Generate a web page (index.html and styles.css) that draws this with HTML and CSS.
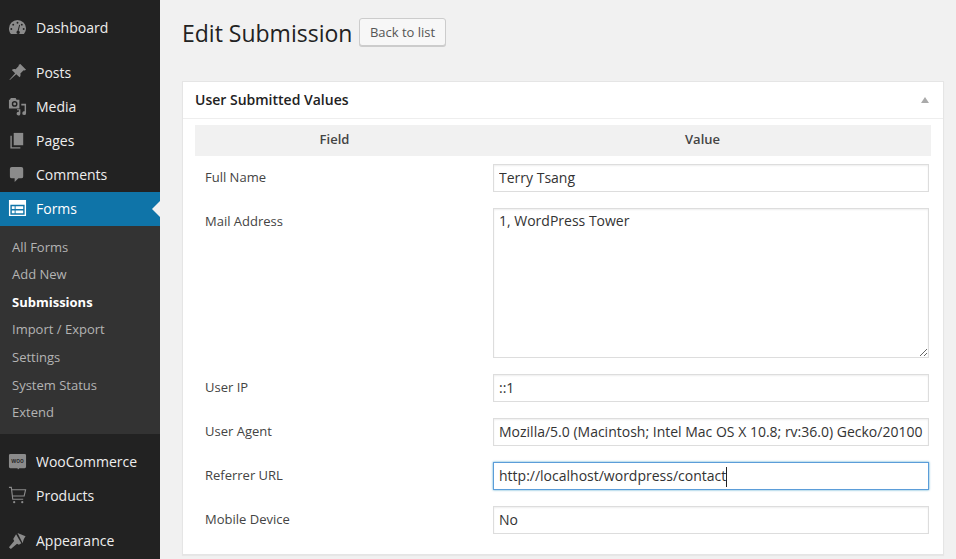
FILE: index.html
```html
<!DOCTYPE html>
<html lang="en">
<head>
    <meta charset="UTF-8">
    <meta name="viewport" content="width=device-width, initial-scale=1.0">
    <title>Edit Submission</title>
    <link rel="stylesheet" href="styles.css">
</head>
<body>
    <div class="sidebar">
        <ul class="menu">
            <li class="menu-item">
                <svg class="icon" viewBox="0 0 20 20"><path d="M10 2a9 9 0 0 0-9 9c0 2.300.8 4.300 2.200 5.900h13.600A9 9 0 0 0 19 11a9 9 0 0 0-9-9zM10 4a1 1 0 1 1 0 2 1 1 0 0 1 0-2zM5.500 6a1 1 0 1 1 0 2 1 1 0 0 1 0-2zM14.500 6a1 1 0 1 1 0 2 1 1 0 0 1 0-2zM3.500 10.500a1 1 0 1 1 0 2 1 1 0 0 1 0-2zM16.500 10.500a1 1 0 1 1 0 2 1 1 0 0 1 0-2zM11.800 7l.9.4-1.500 6a1.800 1.800 0 1 1-2.300 1.700c0-.8.5-1.400 1.200-1.700z" fill-rule="evenodd"/></svg>
                Dashboard
            </li>
            <li class="menu-item gap">
                <svg class="icon" viewBox="0 0 20 20"><path d="M13 1l6 6-1.500 1-1-.5-3.500 3.500c.5 1.500.2 3-.8 4L8.700 11.900 2 18l-.5-.5 6-6.800L4 7.300c1-1 2.500-1.300 4-.8L11.500 3l-.5-1z"/></svg>
                Posts
            </li>
            <li class="menu-item">
                <svg class="icon" viewBox="0 0 20 20"><path d="M3 1h5l1 2h3v9H1V3h1zM7 4.300a3 3 0 1 0 0 6 3 3 0 0 0 0-6zM7 5.800a1.500 1.500 0 1 1 0 3 1.500 1.500 0 0 1 0-3z" fill-rule="evenodd"/><path d="M14 7h5v10a2 2 0 1 1-1.500-1.900V9H14zM9.500 14v-1h3.500v4.500a2 2 0 1 1-1.500-1.900V14z"/></svg>
                Media
            </li>
            <li class="menu-item">
                <svg class="icon" viewBox="0 0 20 20"><path d="M6 2h10v13H6z"/><path d="M4 5v12h9v1.500H2.500V5z"/></svg>
                Pages
            </li>
            <li class="menu-item">
                <svg class="icon" viewBox="0 0 20 20"><path d="M4 2h10a2 2 0 0 1 2 2v8a2 2 0 0 1-2 2h-3l-4 4v-4H4a2 2 0 0 1-2-2V4a2 2 0 0 1 2-2z"/></svg>
                Comments
            </li>
            <li class="menu-item current">
                <svg class="icon" viewBox="0 0 20 20"><path d="M1 1h18v17H1zM2.500 6v10.500h15V6zM4 7.500h3v3H4zM8 7.500h8v3H8zM4 12h3v3H4zM8 12h8v3H8z" fill-rule="evenodd"/></svg>
                Forms
            </li>
            <li>
                <ul class="submenu">
                    <li>All Forms</li>
                    <li>Add New</li>
                    <li class="active">Submissions</li>
                    <li>Import / Export</li>
                    <li>Settings</li>
                    <li>System Status</li>
                    <li>Extend</li>
                </ul>
            </li>
            <li class="menu-item gap after-sub">
                <svg class="icon" viewBox="0 0 20 20"><path d="M2.500 2h15A1.500 1.500 0 0 1 19 3.500v12a1.500 1.500 0 0 1-1.500 1.500H12l-1.500 1.500L10 17H2.500A1.500 1.500 0 0 1 1 15.500v-12A1.500 1.500 0 0 1 2.500 2z"/><text class="woo-mark" x="10" y="11.500" text-anchor="middle">woo</text></svg>
                WooCommerce
            </li>
            <li class="menu-item">
                <svg class="icon" viewBox="0 0 20 20"><path class="cart" d="M1 1.500h2.500l1.500 12.500h11M4 4h14.500l-1.500 6.500H5"/><circle cx="6.500" cy="17" r="1.200"/><circle cx="15" cy="17" r="1.200"/></svg>
                Products
            </li>
            <li class="menu-item gap">
                <svg class="icon" viewBox="0 0 20 20"><path d="M10 2l8.500 3.500c-1.500 2-2.500 4-3 7.500zM8.500 3.500L14 13l-2.500 1.500-2-1L3 19l-2-2 5.500-6.500-1-2z"/></svg>
                Appearance
            </li>
        </ul>
    </div>

    <div class="content">
        <div class="title-row">
            <h1>Edit Submission</h1>
            <a class="button">Back to list</a>
        </div>

        <div class="panel">
            <div class="panel-head">
                <h2>User Submitted Values</h2>
                <span class="toggle"></span>
            </div>
            <div class="panel-body">
                <table class="values">
                    <thead>
                        <tr>
                            <th class="col-field">Field</th>
                            <th class="col-value">Value</th>
                        </tr>
                    </thead>
                    <tbody>
                        <tr>
                            <td class="label">Full Name</td>
                            <td class="value"><input type="text" value="Terry Tsang"></td>
                        </tr>
                        <tr>
                            <td class="label">Mail Address</td>
                            <td class="value"><textarea>1, WordPress Tower</textarea></td>
                        </tr>
                        <tr>
                            <td class="label">User IP</td>
                            <td class="value"><input type="text" value="::1"></td>
                        </tr>
                        <tr>
                            <td class="label">User Agent</td>
                            <td class="value"><input type="text" value="Mozilla/5.0 (Macintosh; Intel Mac OS X 10.8; rv:36.0) Gecko/20100101 Firefox/36.0"></td>
                        </tr>
                        <tr>
                            <td class="label">Referrer URL</td>
                            <td class="value"><div class="focused">http://localhost/wordpress/contact<span class="caret"></span></div></td>
                        </tr>
                        <tr>
                            <td class="label">Mobile Device</td>
                            <td class="value"><input type="text" value="No"></td>
                        </tr>
                    </tbody>
                </table>
            </div>
        </div>
    </div>
</body>
</html>
```

FILE: styles.css
```css
html, body {
    height: 559px;
}

body {
    margin: 0;
    display: flex;
    overflow: hidden;
    font-family: "Open Sans", sans-serif;
    background-color: #f1f1f1;
    color: #444;
}

ul {
    list-style: none;
    margin: 0;
    padding: 0;
}

/* sidebar */
.sidebar {
    width: 160px;
    flex-shrink: 0;
    background-color: #222;
}

.menu {
    padding-top: 11px;
}

.menu-item {
    position: relative;
    box-sizing: border-box;
    display: flex;
    align-items: center;
    gap: 9px;
    height: 34px;
    padding: 0 0 2px 8px;
    font-size: 14px;
    color: #eee;
}

.menu-item.gap {
    margin-top: 11px;
}

.menu-item.gap.after-sub {
    margin-top: 12px;
}

.icon {
    width: 19px;
    height: 19px;
    fill: #8b8b8b;
}

.cart {
    fill: none;
    stroke: #8b8b8b;
    stroke-width: 1.2;
}

.woo-mark {
    font-family: "Open Sans", sans-serif;
    font-size: 6.5px;
    font-weight: 600;
    fill: #222;
}

.menu-item.current {
    background-color: #0f74a8;
    color: #fff;
}

.menu-item.current .icon {
    fill: #fff;
}

.menu-item.current::after {
    content: "";
    position: absolute;
    right: 0;
    top: 9px;
    border: 8px solid transparent;
    border-left-width: 0;
    border-right-color: #f1f1f1;
}

.submenu {
    padding: 7.55px 0 6.9px;
    background-color: #333;
    font-size: 13px;
    color: #b4b4b4;
}

.submenu li {
    height: 27.65px;
    line-height: 27.65px;
    padding-left: 12px;
}

.submenu .active {
    font-weight: 700;
    color: #fff;
}

/* main */
.content {
    flex: 1;
    padding: 18px 12px 0 22px;
}

.title-row {
    display: flex;
    align-items: center;
    gap: 7px;
    height: 29px;
    margin-bottom: 34px;
}

h1 {
    margin: 0;
    font-size: 23px;
    font-weight: 400;
    color: #222;
}

.button {
    padding: 0 9.5px;
    height: 26px;
    margin-bottom: 2px;
    line-height: 26px;
    font-size: 13px;
    color: #555;
    background-color: #f7f7f7;
    border: 1px solid #ccc;
    border-radius: 3px;
    box-shadow: 0 1px 0 #ccc;
}

.panel {
    height: 472px;
    background-color: #fff;
    border: 1px solid #e5e5e5;
    box-shadow: 0 1px 1px rgba(0, 0, 0, 0.04);
}

.panel-head {
    display: flex;
    align-items: center;
    justify-content: space-between;
    height: 36px;
    padding: 0 14px 0 12px;
    border-bottom: 1px solid #eee;
}

h2 {
    margin: 0 0 2px;
    font-size: 14px;
    font-weight: 600;
    color: #222;
}

.toggle {
    border: 4px solid transparent;
    border-top-width: 0;
    border-bottom: 6px solid #aaa;
}

.panel-body {
    padding: 6px 12px 0;
}

.values {
    width: 736px;
    border-collapse: collapse;
    table-layout: fixed;
}

th {
    box-sizing: border-box;
    height: 31px;
    padding: 0 0 3px;
    font-size: 13px;
    font-weight: 600;
    color: #444;
    background-color: #f1f1f1;
}

.col-field {
    width: 279px;
}

td {
    padding: 8px 2px 8px 19px;
    vertical-align: top;
}

.label {
    padding: 12px 0 0 10px;
    font-size: 13px;
    line-height: 18px;
    color: #444;
}

input, textarea, .focused {
    display: block;
    box-sizing: border-box;
    width: 436px;
    margin: 0;
    padding: 0 5px;
    font-family: "Open Sans", sans-serif;
    font-size: 14px;
    color: #333;
    background-color: #fff;
    border: 1px solid #ddd;
    border-radius: 0;
    outline: none;
    box-shadow: inset 0 1px 2px rgba(0, 0, 0, 0.07);
}

input {
    height: 28px;
    padding-bottom: 2px;
}

.focused {
    height: 28px;
    line-height: 26px;
    border-color: #5b9dd9;
    box-shadow: 0 0 2px rgba(30, 140, 190, 0.8);
}

textarea {
    height: 150px;
    padding-top: 2px;
    line-height: 20px;
}

.caret {
    display: inline-block;
    width: 1px;
    height: 20px;
    vertical-align: middle;
    background-color: #222;
}
```
